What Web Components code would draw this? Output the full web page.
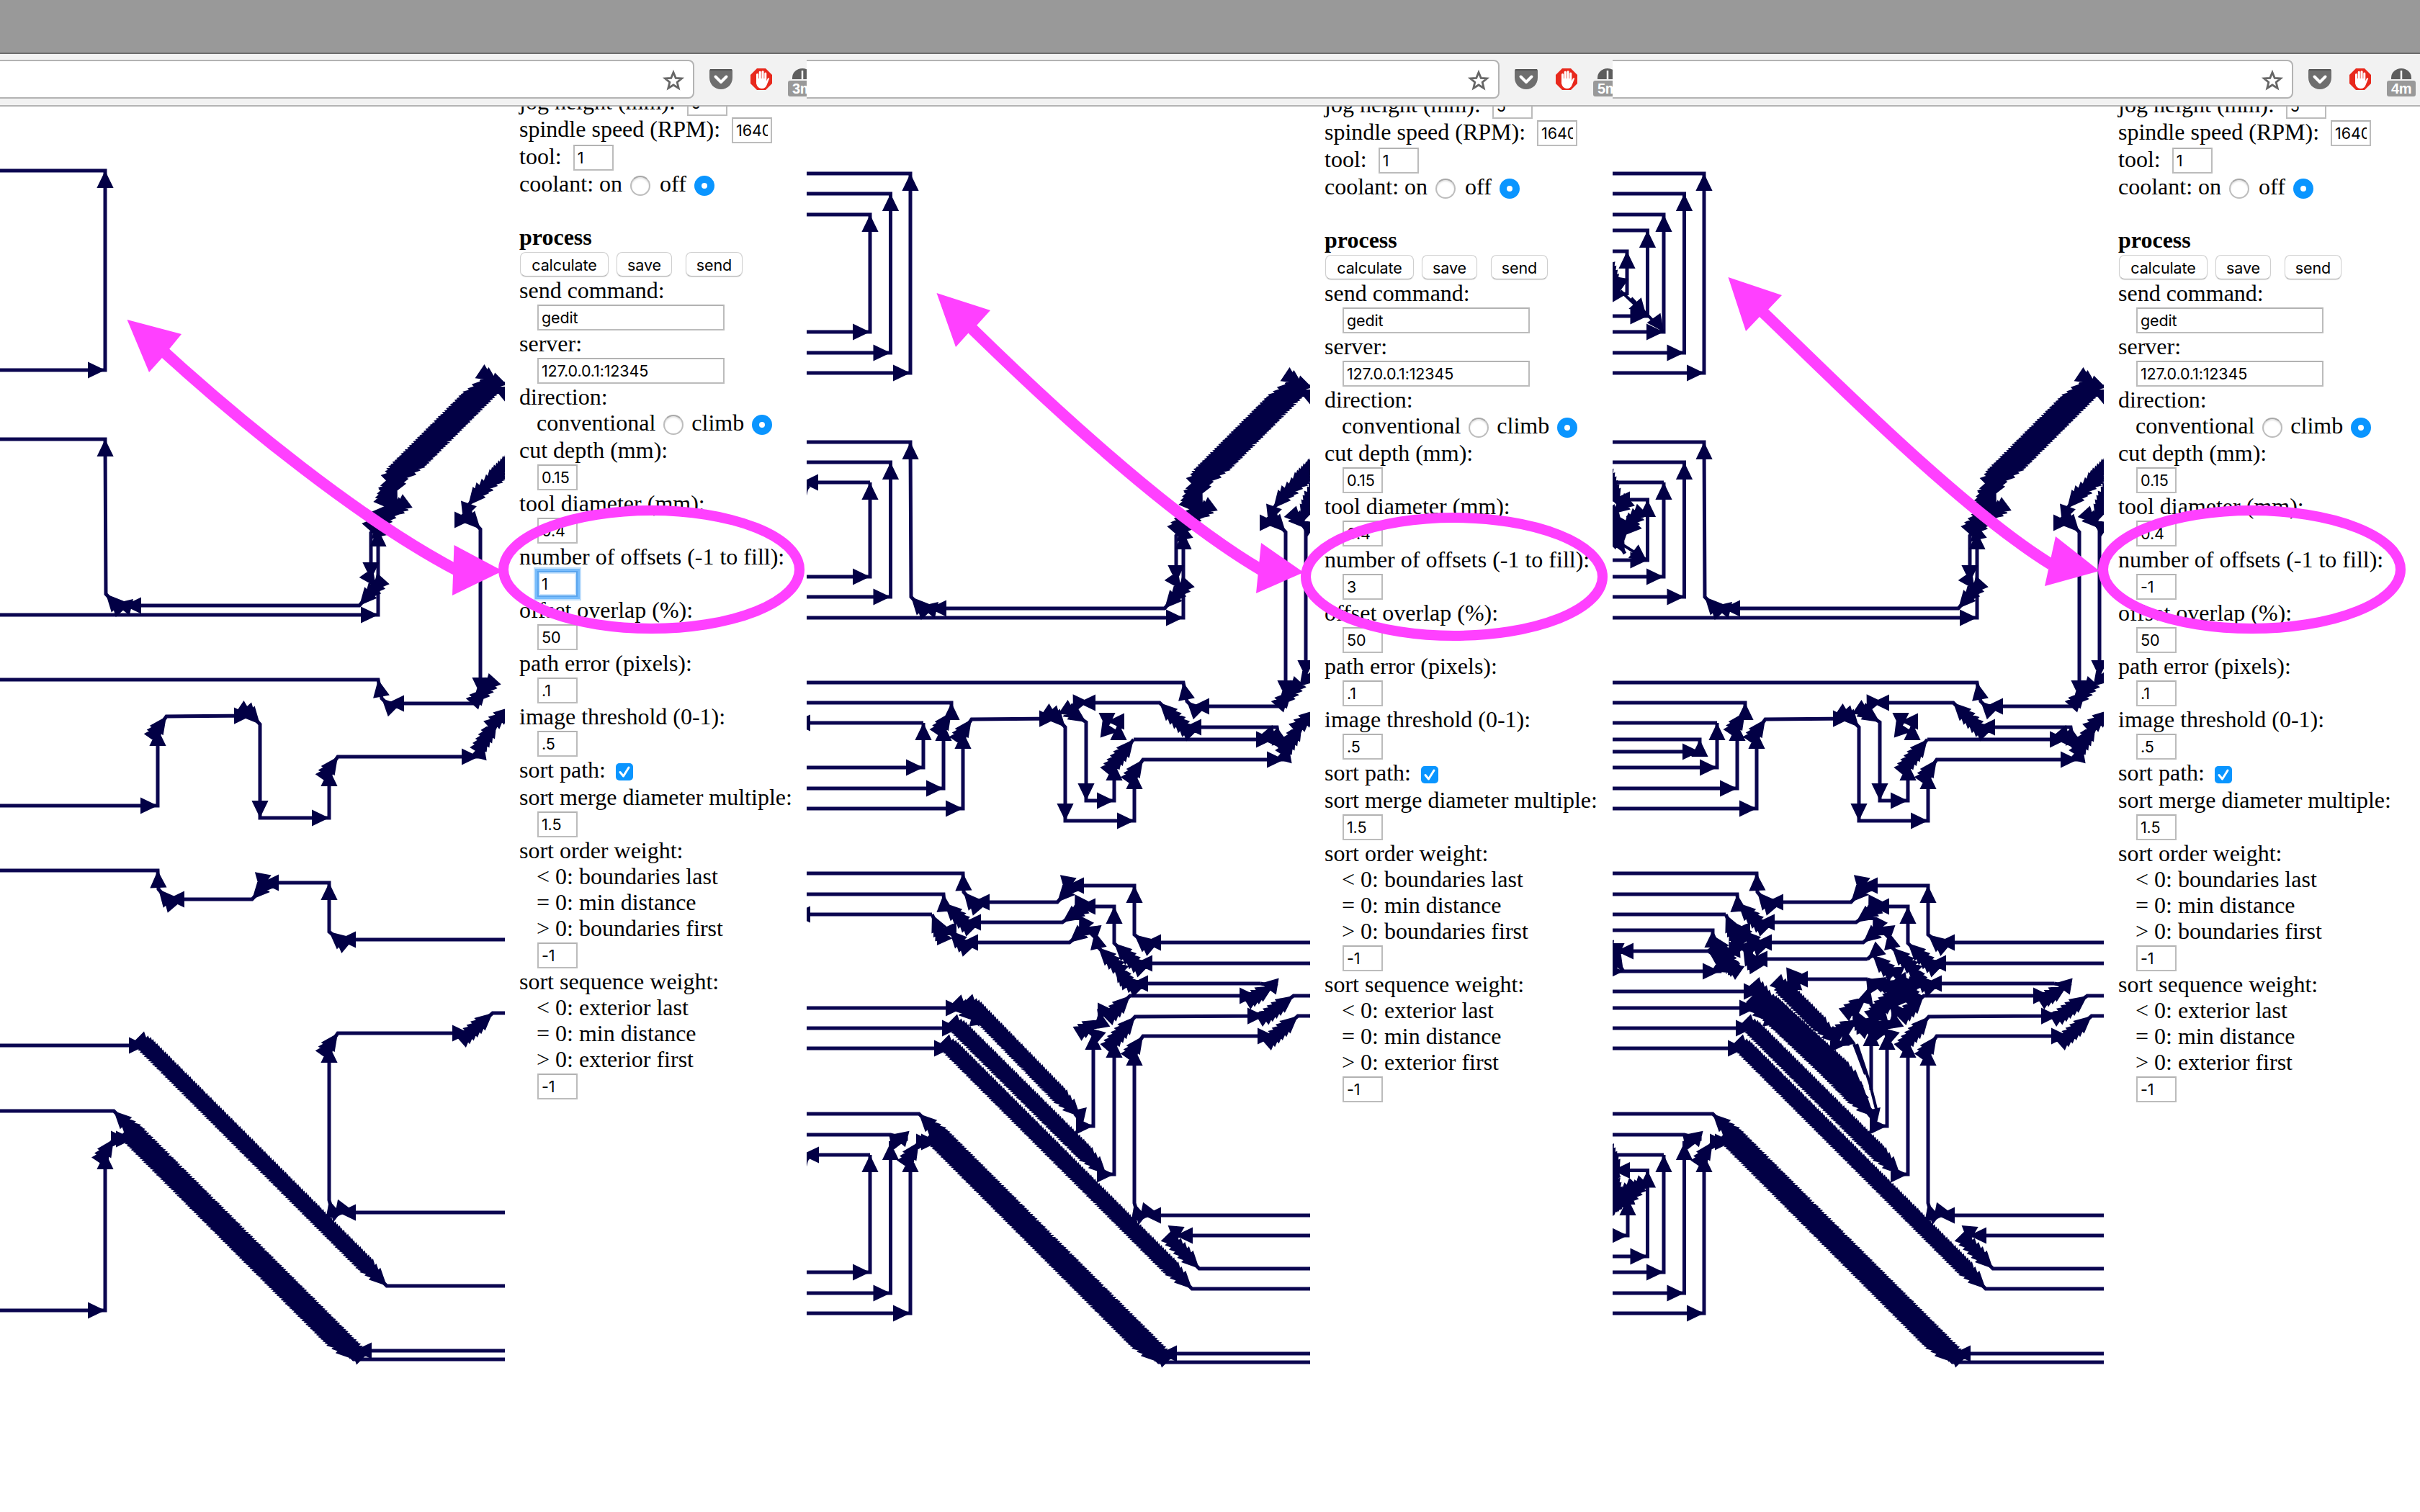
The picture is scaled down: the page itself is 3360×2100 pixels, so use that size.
<!DOCTYPE html>
<html lang="en">
<head>
<meta charset="utf-8">
<title>mods – offsets</title>
<style>
html,body{margin:0;padding:0;background:#fff}
body{width:3360px;height:2100px;overflow:hidden}
</style>
</head>
<body>
<offset-compare></offset-compare>
<script>
const define = (name, html, init) => customElements.define(name, class extends HTMLElement {
  connectedCallback() {
    if (this.shadowRoot) return;
    const root = this.attachShadow({ mode: 'open' });
    root.innerHTML = typeof html === 'function' ? html(this) : html;
    if (init) init(this, root);
  }
});

/* ---------- form controls ---------- */
define('form-row', `<style>
  :host{display:flex;height:36px;line-height:38px;white-space:pre;box-sizing:border-box}
  :host([tall]){height:38px}
  :host([indent]){padding-left:24px}
  :host([bold]){font-weight:bold}
</style><slot></slot>`);

define('text-field', el => `<style>
  :host{display:block;flex:none;box-sizing:border-box;width:56px;height:36px;margin:3px 0 0 1px;border:2px solid #bcbcbc;border-top-color:#b2b2b2;
    background:#fff;padding:0 4px;font:21.5px/33px Inter,"Liberation Sans",sans-serif;color:#000}
  :host([wide]){width:260px}
  :host([inline]){margin-left:16px}
  :host([focus]){border-color:#5aa5ee;box-shadow:0 0 0 3px #78bcfb,0 0 0 5px #bfdffc,inset 0 0 0 2px #cfe7fd}
  div{overflow:hidden;white-space:nowrap;letter-spacing:-.12px}
</style><div>${el.getAttribute('value')}</div>`);

define('radio-dot', `<style>
  :host{display:block;flex:none;box-sizing:border-box;width:28px;height:28px;border-radius:50%;margin:8px 0 0 11px;
    border:2px solid #bdbdbd;border-top-color:#a8a8a8;background:#fff;box-shadow:inset 0 2px 2px #e4e4e4}
  :host([checked]){border:10px solid #0a95ff;box-shadow:none}
</style>`);

define('check-mark', `<style>
  :host{display:block;flex:none;width:24px;height:24px;margin:10px 0 0 14px;border-radius:5px;background:#0a95ff}
  svg{display:block}
</style><svg width="24" height="24"><path d="M6 12.5 10.5 18 18 6" fill="none" stroke="#fff" stroke-width="3" stroke-linecap="round" stroke-linejoin="round"/></svg>`);

define('push-button', `<style>
  :host{display:block;flex:none;box-sizing:border-box;height:34px;margin-top:4px;border:1.5px solid #cfcfcf;border-bottom-color:#b5b5b5;border-radius:8px;
    background:#fff;text-align:center;font:21.5px/34px Inter,"Liberation Sans",sans-serif;letter-spacing:-.1px;box-shadow:0 1px 1px #ddd}
</style><slot></slot>`);

define('tool-form', el => {
  const label = t => `<form-row>${t}</form-row>`;
  const note = t => `<form-row indent>${t}</form-row>`;
  const field = (v, extra = '') => `<form-row tall indent><text-field value="${v}" ${extra}></text-field></form-row>`;
  const off = el.getAttribute('offsets');
  return `<style>
    :host{display:flex;flex-direction:column;font:32px/38px "Liberation Serif","Times New Roman",serif;color:#000;width:410px}
  </style>
  <form-row tall>jog height (mm):<text-field inline value="5"></text-field></form-row>
  <form-row tall>spindle speed (RPM):<text-field inline value="16400"></text-field></form-row>
  <form-row tall>tool:<text-field inline value="1"></text-field></form-row>
  <form-row tall>coolant: on<radio-dot></radio-dot><span style="margin-left:13px">off</span><radio-dot checked></radio-dot></form-row>
  <form-row></form-row>
  <form-row bold>process</form-row>
  <form-row tall><push-button style="width:123px;margin-left:1px">calculate</push-button><push-button style="width:77px;margin-left:11px">save</push-button><push-button style="width:79px;margin-left:19px">send</push-button></form-row>
  ${label('send command:')}${field('gedit', 'wide')}
  ${label('server:')}${field('127.0.0.1:12345', 'wide')}
  ${label('direction:')}
  <form-row tall indent>conventional<radio-dot></radio-dot><span style="margin-left:11px">climb</span><radio-dot checked></radio-dot></form-row>
  ${label('cut depth (mm):')}${field('0.15')}
  ${label('tool diameter (mm):')}${field('0.4')}
  ${label('number of offsets (-1 to fill):')}${field(off, off === '1' ? 'focus' : '')}
  ${label('offset overlap (%):')}${field('50')}
  ${label('path error (pixels):')}${field('.1')}
  ${label('image threshold (0-1):')}${field('.5')}
  <form-row tall>sort path:<check-mark></check-mark></form-row>
  ${label('sort merge diameter multiple:')}${field('1.5')}
  ${label('sort order weight:')}${note('&lt; 0: boundaries last')}${note('= 0: min distance')}${note('&gt; 0: boundaries first')}${field('-1')}
  ${label('sort sequence weight:')}${note('&lt; 0: exterior last')}${note('= 0: min distance')}${note('&gt; 0: exterior first')}${field('-1')}`;
});

/* ---------- toolpath drawing ---------- */
const BASE = [
  'M0 514 146 514 146 237 0 237',
  '760 543 697 543 684 537 553 668 543 688 552 706 536 718 515 740 515 805 522 815 499 841 172 841 159 838 147 825 146 610 0 610',
  '0 854 525 854 525 735 522 722 541 700 536 685 548 657 680 525 692 533 760 531',
  '715 635 660 690 650 702 643 722 655 722 667 735 667 965 676 955 656 977 537 977 530 970 525 944 0 944',
  '0 1119 219 1119 219 1012 231 995 349 994 352 996 361 1006 361 1136 457 1136 457 1068 469 1051 665 1051 671 1030 690 1000 710 982',
  '760 1305 470 1305 457 1294 457 1226 363 1226 361 1237 350 1249 232 1249 220 1235 219 1209 0 1209',
  '0 1452 203 1452 537 1786 760 1786',
  '760 1684 470 1684 464 1692 457 1667 457 1452 469 1435 652 1435 684 1407 760 1407',
  '760 1876 492 1876 158 1543 0 1543',
  '0 1820 146 1820 146 1600 158 1582 178 1582 185 1582 491 1888 760 1888'
];
const THREE = [
  '0 486 118.5 486 118.5 265 0 265',
  '0 457 90 457 90 294 0 294',
  '0 825 118.5 825 118.5 638 0 638',
  '0 797 90 797 90 666',
  '712 665 698 698 690 722 684 718 695 730 695 937 690 938 712 942',
  '0 1091 192 1091 192 1001 203 985 203 972 0 972',
  '0 1062 164 1062 164 1000',
  '435 998 419 998 419 1010 435 1012 435 1000',
  '456 1023 650 1023 660 1035 655 1006 526 1006 492 972 379 972 372 987 390 999 390 1108 429 1108 429 1056 456 1023',
  '760 1334 458 1334 429 1306 429 1255 379 1255 374 1265 357 1277 220 1277 193 1250 192 1238 0 1238',
  '632 1362 452 1362 440 1350 430 1335 407 1312 402 1290 385 1284 380 1294 367 1305 216 1305 200 1288 186 1288 176 1266',
  '0 1424 214 1424 418 1627 429 1627 429 1441 458 1408 638 1407 650 1400 678 1379 760 1379',
  '0 1396 219 1396 238 1415 235 1396 382 1547 385 1560 400 1560 400 1430 392 1423 410 1412 408 1400 430 1400 451 1379 627 1379 650 1365 632 1362',
  '760 1712 514 1712 513 1723 547 1758 760 1758',
  '0 1792 118.5 1792 118.5 1583 142 1578 118.5 1572 0 1572',
  '0 1763 90 1763 90 1600'
];
const LEFT3 = [
  '90 666 -6 666 -10 690 5 671', '90 1600 -5 1600 -10 1622 5 1603', '164 1000 -17 1000', '176 1266 -17 1266'
];
const FILL = [
  '90 294 0 294', '90 666 0 666', '90 1600 0 1600', '164 1000 0 1000', '176 1266 0 1266',
  '0 435 67.5 435 67.5 316 0 316',
  '39 406 39 345 0 345', '17 380 26 408', '30 382 26 405 39 404',
  '0 774 67.5 774 67.5 690 19 690', '30 700 18 710 33 728 26 740 44 722 40 712', '50 715 32 733', '14 730 42 722', '16 668 28 700', '20 735 36 765',
  '0 1741 67.5 1741 67.5 1621.5 19 1621.5', '0 1712 40 1712 40 1660 24 1665 40 1650 20 1670 38 1655', '15 1600 28 1632', '10 1665 48 1652', '20 1640 30 1676', '52 1648 25 1676',
  '0 1040 140 1040 140 1023 0 1023',
  '373 1328 210 1328 200 1312 190 1312 195 1300 180 1330 158 1295 158 1288 0 1288',
  '10 1305 24 1345 34 1345 168 1345 170 1322 182 1338 152 1317 24 1317 24 1330 34 1345',
  '0 1373 225 1373 240 1390 373 1522',
  '222 1390 236 1404 380 1540', '232 1396 246 1396 366 1506',
  '373 1356 266 1356 262 1366 256 1368 334 1446 345 1446 341 1424 360 1412 352 1396 372 1380 376 1366 396 1364 373 1356',
  '378 1510 378 1425 374 1420 392 1405 395 1390 425 1365 430 1372 410 1345 398 1340 380 1322 373 1328',
  '388 1400 425 1372', '410 1360 435 1365 408 1396'
];
const THIN = 'M354 1446 370 1488M358 1446 376 1500M376 1500 386 1540M30 400 67 435M45 410 90 457M32 752 67 774';
const THIN_HEADS = [[35,400,66,435],[67,425,90,457],[35,752,67,776]];

function build(lists) {
  let lines = '', heads = '';
  const f = n => n.toFixed(1);
  const head = (x0, y0, x1, y1, w = 11.6) => {
    const l = Math.hypot(x1 - x0, y1 - y0); if (!l) return;
    const ux = (x1 - x0) / l, uy = (y1 - y0) / l, bx = x1 - ux * 24, by = y1 - uy * 24;
    heads += `M${f(x1)} ${f(y1)}L${f(bx - uy * w)} ${f(by + ux * w)}L${f(bx + uy * w)} ${f(by - ux * w)}Z`;
  };
  for (const s of lists) {
    const n = s.replace('M', '').split(' ').map(Number);
    let x = n[0], y = n[1];
    lines += `M${x} ${y}`;
    for (let i = 2; i < n.length; i += 2) {
      const X = n[i], Y = n[i + 1], dx = X - x, dy = Y - y;
      const exits = X === 0 && dy === 0;
      const k = Math.abs(dx) > 7 && Math.abs(dy) > 7 ? Math.max(1, Math.round(Math.max(Math.abs(dx), Math.abs(dy)) / 5.8)) : 1;
      if (!exits)
        for (let j = 1; j <= k; j++) {
          const mid = k > 8 && j > 2 && j < k - 1;
          head(x + dx * (j - 1) / k, y + dy * (j - 1) / k, x + dx * j / k, y + dy * j / k, mid ? 13.3 : 11.6);
          /* half step between two heads keeps the teeth fine */
          if (mid) head(x + dx * (j - 1.5) / k, y + dy * (j - 1.5) / k, x + dx * (j - .5) / k, y + dy * (j - .5) / k, 12.9);
        }
      lines += exits ? `L-20 ${Y}` : `L${X} ${Y}`;
      x = X; y = Y;
    }
  }
  return { lines, head, get all() { return heads; } };
}

define('tool-path', el => {
  const mode = el.getAttribute('offsets');
  let lists = BASE;
  if (mode === '3') lists = [...BASE, ...THREE, ...LEFT3];
  if (mode === '-1') lists = [...BASE, ...THREE, ...FILL];
  const g = build(lists);
  let extra = '';
  if (mode === '-1') {
    THIN_HEADS.forEach(h => g.head(...h));
    extra = `<path d="${THIN}" fill="none" stroke="#020045" stroke-width="4"/>`;
  }
  return `<style>:host{display:block;flex:none;width:701px;height:1952px;overflow:hidden}svg{display:block}</style>
  <svg width="701" height="1952" viewBox="0 ${mode === '1' ? 148 : 144} 701 1952">
    <path d="${g.lines}" fill="none" stroke="#0b0650" stroke-width="5"/>${extra}
    <path d="${g.all}" fill="#020045"/></svg>`;
});

/* ---------- browser bar ---------- */
define('browser-bar', el => `<style>
  :host{display:block}
  .tabs{height:73px;background:#999;border-bottom:2px solid #6c6c6c;box-sizing:content-box}
  .bar{height:73px;box-sizing:border-box;background:#f2f2f2;border-bottom:2px solid #b4b4b4;display:flex;padding-top:8px}
  .url{box-sizing:border-box;width:974px;margin-left:-10px;height:54px;background:#fff;border:2px solid #b3b3b3;border-radius:8px;display:flex;justify-content:flex-end;padding:11px 11px 0 0}
  svg{display:block;flex:none}
  .pk{margin:12px 0 0 20px}.ad{margin:11px 0 0 23px}
  .ext{margin:12px 0 0 20px;width:42px;display:flex;flex-direction:column;align-items:center}
  .badge{margin-top:2px;width:40px;height:22px;background:#999;border-radius:3px;color:#fff;font:bold 20px/22px "Liberation Sans",sans-serif;text-align:center;letter-spacing:-.5px}
</style>
<div class="tabs"></div>
<div class="bar">
  <div class="url"><svg width="32" height="30" viewBox="0 0 32 30"><path d="M16 4.5 19.2 12.3 27.6 12.9 21.2 18.3 23.2 26.5 16 22 8.8 26.5 10.8 18.3 4.4 12.9 12.8 12.3Z" fill="none" stroke="#666" stroke-width="2.8"/></svg></div>
  <svg class="pk" width="34" height="32" viewBox="0 0 34 32"><path d="M3 1H31Q33 1 33 3V13C33 22 26 29 17 29S1 22 1 13V3Q1 1 3 1Z" fill="#6e6e6e"/><path d="M2 2H32" stroke="#555" stroke-width="2"/><path d="M9.500 11.500 17 19 24.500 11.500" fill="none" stroke="#fff" stroke-width="4" stroke-linecap="round" stroke-linejoin="round"/></svg>
  <svg class="ad" width="32" height="32" viewBox="0 0 32 32"><path d="M10 1H22L31 10V22L22 31H10L1 22V10Z" fill="#e8291d"/><path d="M9 17V9.500a1.500 1.500 0 0 1 3 0V15h.7V6a1.600 1.600 0 0 1 3.100 0v9h.7V5.500a1.600 1.600 0 0 1 3.100 0V15h.7V8a1.500 1.500 0 0 1 3 0v10.500l1.500-3.500q1.300-1.500 2.500-.2L24 23q-1.700 6-7.500 6T9 22Z" fill="#fff"/></svg>
  <div class="ext"><svg width="28" height="15"><path d="M0 15V13A14 13 0 0 1 28 13V15Z" fill="#5e5e5e"/><path d="M14 3V15" stroke="#fff" stroke-width="2.500"/></svg><div class="badge">${el.getAttribute('age')}</div></div>
</div>`);

/* ---------- one browser capture ---------- */
define('browser-shot', el => {
  const off = el.getAttribute('offsets'), first = off === '1';
  return `<style>
    :host{display:block;flex:none;height:2100px;overflow:hidden;background:#fff}
    .in{margin-left:${el.getAttribute('shift')}px;width:1145px}
    .page{display:flex;height:1952px;overflow:hidden}
    tool-form{margin:${first ? -26 : -22}px 0 0 20px}
  </style>
  <div class="in"><browser-bar age="${el.getAttribute('age')}"></browser-bar>
  <div class="page"><tool-path offsets="${off}"></tool-path><tool-form offsets="${off}"></tool-form></div></div>`;
});

define('callout-layer', `<style>:host{position:absolute;inset:0;pointer-events:none}svg{display:block}</style>
<svg width="3360" height="2100"><g fill="none" stroke="#ff40ff" stroke-width="14">
  <ellipse cx="904.500" cy="791" rx="205.500" ry="82"/><ellipse cx="2019" cy="801" rx="206" ry="82"/><ellipse cx="3126.500" cy="791" rx="206.500" ry="82"/>
  <g stroke-width="16"><path d="M228 489C330 582 500 722 636 793"/><path d="M1346 453C1440 545 1620 715 1752 792"/><path d="M2446 432C2530 512 2720 705 2848 784"/></g></g>
  <g fill="#ff40ff"><path d="M176.500 444 252 464 234 486 225 497 207 517Z"/><path d="M698 793 630.500 757 628 827Z"/>
  <path d="M1300.500 407 1375 431 1356 452 1345 462 1327 482Z"/><path d="M1810 795 1751 754 1744 824Z"/>
  <path d="M2399.500 385 2474 410 2454 431 2443 440 2424 460Z"/><path d="M2915 793 2854 745 2839 814Z"/></g></svg>`);

define('offset-compare', `<style>:host{display:flex;position:relative;width:3360px;height:2100px;overflow:hidden}</style>
<browser-shot style="width:1120px" shift="0" offsets="1" age="3m"></browser-shot>
<browser-shot style="width:1119px" shift="-2" offsets="3" age="5m"></browser-shot>
<browser-shot style="width:1121px" shift="-19" offsets="-1" age="4m"></browser-shot>
<callout-layer></callout-layer>`);
</script>
</body>
</html>
